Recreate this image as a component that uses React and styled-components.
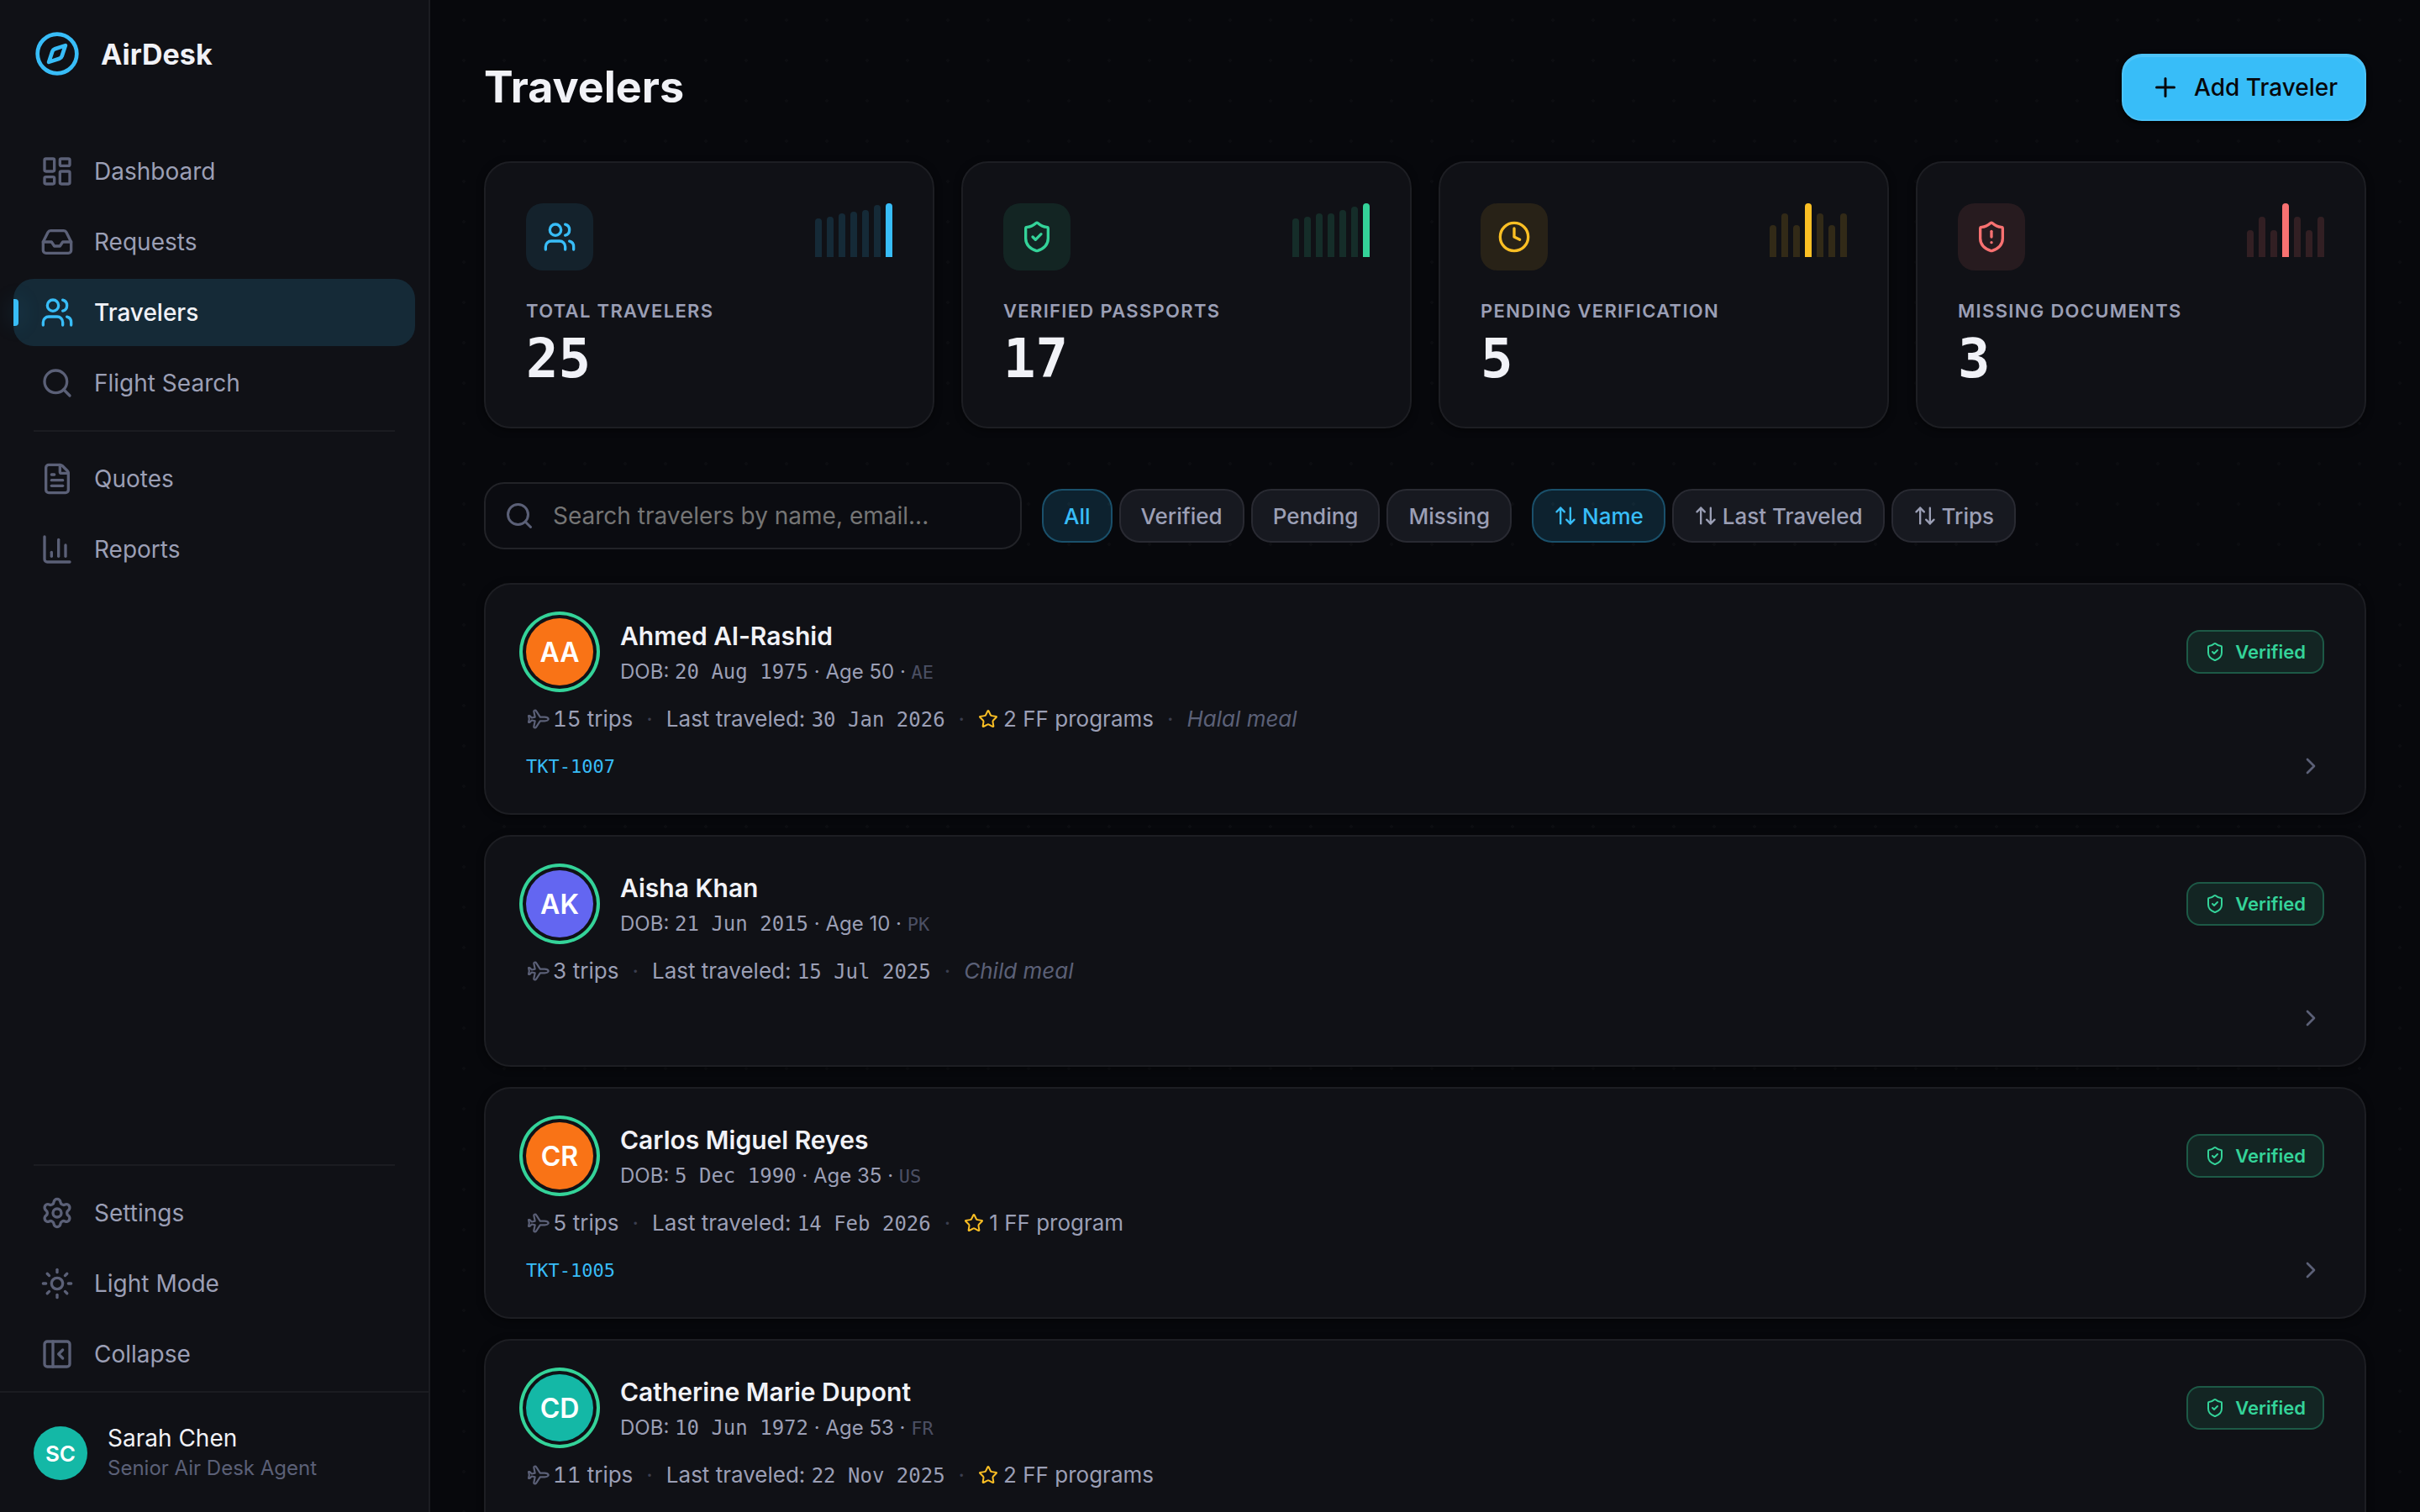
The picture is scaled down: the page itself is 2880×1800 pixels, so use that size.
import { useState } from "react";
import styled, { createGlobalStyle } from "styled-components";
import {
  ArrowUpDown,
  ChartColumn,
  ChevronRight,
  Clock,
  Compass,
  FileText,
  Inbox,
  LayoutDashboard,
  PanelLeftClose,
  Plane,
  Plus,
  Search,
  Settings,
  ShieldAlert,
  ShieldCheck,
  Star,
  Sun,
  Users,
} from "lucide-react";

const mainLinks = [
  { label: "Dashboard", icon: LayoutDashboard },
  { label: "Requests", icon: Inbox },
  { label: "Travelers", icon: Users },
  { label: "Flight Search", icon: Search },
];

const reportLinks = [
  { label: "Quotes", icon: FileText },
  { label: "Reports", icon: ChartColumn },
];

const stats = [
  {
    label: "Total Travelers",
    value: 25,
    icon: Users,
    color: "56, 189, 248",
    bars: [46, 48, 52, 54, 56, 62, 64],
    peak: 6,
  },
  {
    label: "Verified Passports",
    value: 17,
    icon: ShieldCheck,
    color: "52, 211, 153",
    bars: [46, 48, 52, 52, 56, 60, 64],
    peak: 6,
  },
  {
    label: "Pending Verification",
    value: 5,
    icon: Clock,
    color: "251, 191, 36",
    bars: [38, 52, 38, 64, 52, 38, 52],
    peak: 3,
  },
  {
    label: "Missing Documents",
    value: 3,
    icon: ShieldAlert,
    color: "248, 113, 113",
    bars: [32, 48, 32, 64, 48, 32, 48],
    peak: 3,
  },
];

const filters = ["All", "Verified", "Pending", "Missing"];
const sorts = ["Name", "Last Traveled", "Trips"];

const travelers = [
  {
    initials: "AA",
    name: "Ahmed Al-Rashid",
    dob: "20 Aug 1975",
    age: 50,
    country: "AE",
    trips: 15,
    last: "30 Jan 2026",
    programs: 2,
    meal: "Halal meal",
    ticket: "TKT-1007",
    color: "#f97316",
  },
  {
    initials: "AK",
    name: "Aisha Khan",
    dob: "21 Jun 2015",
    age: 10,
    country: "PK",
    trips: 3,
    last: "15 Jul 2025",
    programs: 0,
    meal: "Child meal",
    color: "#6366f1",
  },
  {
    initials: "CR",
    name: "Carlos Miguel Reyes",
    dob: "5 Dec 1990",
    age: 35,
    country: "US",
    trips: 5,
    last: "14 Feb 2026",
    programs: 1,
    ticket: "TKT-1005",
    color: "#f97316",
  },
  {
    initials: "CD",
    name: "Catherine Marie Dupont",
    dob: "10 Jun 1972",
    age: 53,
    country: "FR",
    trips: 11,
    last: "22 Nov 2025",
    programs: 2,
    color: "#14b8a6",
  },
];

function NavLink({ item, active }) {
  const Icon = item.icon;
  return (
    <NavItem href="#" $active={active} aria-current={active ? "page" : undefined}>
      <Icon size={40} strokeWidth={2} />
      {item.label}
    </NavItem>
  );
}

function StatCard({ stat }) {
  const Icon = stat.icon;
  return (
    <Stat>
      <StatTop>
        <StatIcon $color={stat.color}>
          <Icon size={40} strokeWidth={2} />
        </StatIcon>
        <Bars>
          {stat.bars.map((height, i) => (
            <Bar
              key={i}
              $color={stat.color}
              $peak={i === stat.peak}
              style={{ height }}
            />
          ))}
        </Bars>
      </StatTop>
      <StatLabel>{stat.label}</StatLabel>
      <StatValue>{stat.value}</StatValue>
    </Stat>
  );
}

function TravelerCard({ traveler }) {
  return (
    <Card>
      <CardTop>
        <Avatar $color={traveler.color}>{traveler.initials}</Avatar>
        <Identity>
          <Name>{traveler.name}</Name>
          <Birth>
            DOB: <Mono>{traveler.dob}</Mono> · Age {traveler.age} ·{" "}
            <Country>{traveler.country}</Country>
          </Birth>
        </Identity>
        <Badge>
          <ShieldCheck size={24} strokeWidth={2} />
          Verified
        </Badge>
      </CardTop>
      <Details>
        <Trips>
          <PlaneIcon size={26} strokeWidth={2} />
          {traveler.trips} trips
        </Trips>
        <Dot>·</Dot>
        <span>
          Last traveled: <Mono>{traveler.last}</Mono>
        </span>
        {traveler.programs > 0 && (
          <>
            <Dot>·</Dot>
            <Detail>
              <Star size={24} strokeWidth={2} color="#fbbf24" />
              {traveler.programs} FF program{traveler.programs > 1 ? "s" : ""}
            </Detail>
          </>
        )}
        {traveler.meal && (
          <>
            <Dot>·</Dot>
            <Meal>{traveler.meal}</Meal>
          </>
        )}
      </Details>
      <CardBottom>
        {traveler.ticket && <Ticket href="#">{traveler.ticket}</Ticket>}
        <OpenButton type="button" aria-label={`Open ${traveler.name}`}>
          <ChevronRight size={32} strokeWidth={2} />
        </OpenButton>
      </CardBottom>
    </Card>
  );
}

export default function App() {
  const [filter, setFilter] = useState("All");
  const [sort, setSort] = useState("Name");

  return (
    <Page>
      <GlobalStyle />
      <Sidebar>
        <Brand>
          <Compass size={56} strokeWidth={2} color="#38bdf8" />
          AirDesk
        </Brand>
        <Nav aria-label="Main">
          {mainLinks.map((item) => (
            <NavLink
              key={item.label}
              item={item}
              active={item.label === "Travelers"}
            />
          ))}
          <Divider />
          {reportLinks.map((item) => (
            <NavLink key={item.label} item={item} />
          ))}
        </Nav>
        <BottomNav>
          <Divider />
          <NavLink item={{ label: "Settings", icon: Settings }} />
          <NavItem as="button" type="button">
            <Sun size={40} strokeWidth={2} />
            Light Mode
          </NavItem>
          <NavItem as="button" type="button">
            <PanelLeftClose size={40} strokeWidth={2} />
            Collapse
          </NavItem>
        </BottomNav>
        <Profile>
          <ProfilePic>SC</ProfilePic>
          <div>
            <ProfileName>Sarah Chen</ProfileName>
            <ProfileRole>Senior Air Desk Agent</ProfileRole>
          </div>
        </Profile>
      </Sidebar>
      <Main>
        <Header>
          <h1>Travelers</h1>
          <AddButton type="button">
            <Plus size={36} strokeWidth={2} />
            Add Traveler
          </AddButton>
        </Header>
        <Stats>
          {stats.map((stat) => (
            <StatCard key={stat.label} stat={stat} />
          ))}
        </Stats>
        <Toolbar>
          <SearchBox>
            <Search size={36} strokeWidth={2} />
            <input
              type="text"
              aria-label="Search travelers"
              placeholder="Search travelers by name, email..."
            />
          </SearchBox>
          <Pills>
            {filters.map((label) => (
              <Pill
                key={label}
                type="button"
                $active={filter === label}
                onClick={() => setFilter(label)}
              >
                {label}
              </Pill>
            ))}
          </Pills>
          <Pills>
            {sorts.map((label) => (
              <Pill
                key={label}
                type="button"
                $active={sort === label}
                onClick={() => setSort(label)}
              >
                <ArrowUpDown size={28} strokeWidth={2} />
                {label}
              </Pill>
            ))}
          </Pills>
        </Toolbar>
        <List>
          {travelers.map((traveler) => (
            <TravelerCard key={traveler.name} traveler={traveler} />
          ))}
        </List>
      </Main>
    </Page>
  );
}

const GlobalStyle = createGlobalStyle`
  * {
    box-sizing: border-box;
  }
  body {
    margin: 0;
    background: #07080c;
    color: #f1f2f7;
    font-family: Inter, "Liberation Sans", sans-serif;
    -webkit-font-smoothing: antialiased;
  }
  button,
  input {
    font-family: inherit;
  }
  h1,
  h2,
  p,
  ul {
    margin: 0;
    padding: 0;
  }
  svg {
    flex-shrink: 0;
  }
`;

const Page = styled.div`
  display: flex;
  height: 100vh;
  background-color: #07080c;
  background-image: radial-gradient(
    circle,
    rgba(255, 255, 255, 0.02) 2px,
    transparent 2px
  );
  background-size: 48px 48px;
`;

const Sidebar = styled.aside`
  width: 512px;
  flex-shrink: 0;
  display: flex;
  flex-direction: column;
  background: #101116;
  border-right: 2px solid #1b1c21;
`;

const Brand = styled.div`
  display: flex;
  align-items: center;
  gap: 24px;
  height: 128px;
  padding: 0 40px;
  margin-bottom: 36px;
  font-size: 34px;
  font-weight: 700;
`;

const Nav = styled.nav`
  display: flex;
  flex-direction: column;
  gap: 4px;
  padding: 0 16px;
`;

const BottomNav = styled(Nav)`
  margin-top: auto;
  padding-bottom: 4px;
`;

const NavItem = styled.a`
  position: relative;
  display: flex;
  align-items: center;
  gap: 24px;
  height: 80px;
  padding: 0 32px;
  border: none;
  border-radius: 24px;
  background: ${(p) => (p.$active ? "rgba(56, 189, 248, 0.15)" : "transparent")};
  color: ${(p) => (p.$active ? "#f1f2f7" : "#9b9fb5")};
  font-size: 28px;
  font-weight: ${(p) => (p.$active ? 500 : 400)};
  text-decoration: none;
  cursor: pointer;
  svg {
    color: ${(p) => (p.$active ? "#38bdf8" : "#5b6077")};
  }
  &::before {
    content: "";
    display: ${(p) => (p.$active ? "block" : "none")};
    position: absolute;
    left: 0;
    top: 24px;
    width: 6px;
    height: 32px;
    border-radius: 0 4px 4px 0;
    background: #38bdf8;
    box-shadow: 0 0 24px rgba(56, 189, 248, 0.25);
  }
`;

const Divider = styled.hr`
  height: 2px;
  margin: 12px 24px;
  border: none;
  background: #1b1c21;
`;

const Profile = styled.div`
  display: flex;
  align-items: center;
  gap: 24px;
  padding: 36px 40px 34px;
  border-top: 2px solid #1b1c21;
`;

const ProfilePic = styled.div`
  display: flex;
  align-items: center;
  justify-content: center;
  width: 64px;
  height: 64px;
  border-radius: 50%;
  background: #14b8a6;
  color: #ffffff;
  font-size: 26px;
  font-weight: 600;
`;

const ProfileName = styled.p`
  font-size: 28px;
  line-height: 36px;
`;

const ProfileRole = styled.p`
  color: #5b6077;
  font-size: 24px;
  line-height: 36px;
`;

const Main = styled.main`
  flex: 1;
  min-width: 0;
  padding: 64px;
  overflow-y: auto;
  scrollbar-width: none;
`;

const Header = styled.header`
  display: flex;
  align-items: center;
  justify-content: space-between;
  margin-bottom: 48px;
  h1 {
    font-size: 52px;
    font-weight: 700;
    line-height: 80px;
  }
`;

const AddButton = styled.button`
  display: flex;
  align-items: center;
  gap: 16px;
  height: 80px;
  padding: 0 32px;
  border: 2px solid #4bc3f9;
  border-radius: 24px;
  background: #38bdf8;
  box-shadow: inset 0 2px 0 rgba(255, 255, 255, 0.12), 0 2px 6px #000000;
  color: #07080c;
  font-size: 28px;
  font-weight: 500;
  cursor: pointer;
`;

const Stats = styled.section`
  display: grid;
  grid-template-columns: repeat(4, 1fr);
  gap: 32px;
  margin-bottom: 64px;
`;

const Stat = styled.div`
  padding: 48px;
  border: 2px solid #1d1e23;
  border-radius: 32px;
  background: #101116;
  box-shadow: 0 2px 8px rgba(0, 0, 0, 0.5);
`;

const StatTop = styled.div`
  display: flex;
  align-items: flex-start;
  justify-content: space-between;
  margin-bottom: 32px;
`;

const StatIcon = styled.div`
  display: flex;
  align-items: center;
  justify-content: center;
  width: 80px;
  height: 80px;
  border-radius: 20px;
  background: rgba(${(p) => p.$color}, 0.1);
  color: rgb(${(p) => p.$color});
`;

const Bars = styled.div`
  display: flex;
  align-items: flex-end;
  gap: 6px;
  height: 64px;
`;

const Bar = styled.div`
  width: 8px;
  border-radius: 4px 4px 0 0;
  background: rgba(${(p) => p.$color}, ${(p) => (p.$peak ? 1 : 0.15)});
`;

const StatLabel = styled.p`
  margin-bottom: 8px;
  color: #9b9fb5;
  font-size: 22px;
  font-weight: 600;
  line-height: 32px;
  letter-spacing: 0.06em;
  text-transform: uppercase;
`;

const StatValue = styled.p`
  font-family: "DejaVu Sans Mono", monospace;
  font-size: 64px;
  font-weight: 700;
  line-height: 66px;
`;

const Toolbar = styled.div`
  display: flex;
  align-items: center;
  gap: 24px;
  margin-bottom: 40px;
`;

const SearchBox = styled.label`
  display: flex;
  align-items: center;
  gap: 22px;
  width: 640px;
  height: 80px;
  padding: 0 22px;
  border: 2px solid #222328;
  border-radius: 24px;
  background: #0b0c11;
  color: #5b6077;
  input {
    flex: 1;
    min-width: 0;
    padding: 0;
    border: none;
    outline: none;
    background: transparent;
    color: #f1f2f7;
    font-size: 28px;
  }
  input::placeholder {
    color: #757575;
  }
`;

const Pills = styled.div`
  display: flex;
  gap: 8px;
`;

const Pill = styled.button`
  display: flex;
  align-items: center;
  gap: 6px;
  height: 64px;
  padding: 0 24px;
  border: 2px solid
    ${(p) => (p.$active ? "rgba(56, 189, 248, 0.3)" : "#292a32")};
  border-radius: 24px;
  background: ${(p) => (p.$active ? "rgba(56, 189, 248, 0.15)" : "#171920")};
  color: ${(p) => (p.$active ? "#38bdf8" : "#9b9fb5")};
  font-size: 26px;
  font-weight: 500;
  cursor: pointer;
`;

const List = styled.ul`
  display: flex;
  flex-direction: column;
  gap: 24px;
  list-style: none;
`;

const Card = styled.li`
  padding: 40px 48px;
  border: 2px solid #1d1e23;
  border-radius: 32px;
  background: #101116;
  box-shadow: 0 2px 8px rgba(0, 0, 0, 0.5);
`;

const CardTop = styled.div`
  display: flex;
  align-items: flex-start;
  gap: 32px;
  margin-bottom: 14px;
`;

const Avatar = styled.div`
  display: flex;
  align-items: center;
  justify-content: center;
  width: 80px;
  height: 80px;
  border-radius: 50%;
  background: ${(p) => p.$color};
  box-shadow: 0 0 0 4px #101116, 0 0 0 8px #34d399;
  color: #ffffff;
  font-size: 32px;
  font-weight: 600;
`;

const Identity = styled.div`
  flex: 1;
`;

const Name = styled.h2`
  font-size: 30px;
  font-weight: 600;
  line-height: 42px;
`;

const Birth = styled.p`
  color: #9b9fb5;
  font-size: 24px;
  line-height: 44px;
`;

const Mono = styled.span`
  font-family: "DejaVu Sans Mono", monospace;
  font-size: 24px;
  line-height: 1;
`;

const Country = styled(Mono)`
  color: #4b4f63;
  font-size: 22px;
`;

const Badge = styled.span`
  display: flex;
  align-items: center;
  gap: 12px;
  height: 52px;
  margin-top: 14px;
  padding: 0 20px;
  border: 2px solid rgba(52, 211, 153, 0.3);
  border-radius: 16px;
  background: rgba(52, 211, 153, 0.1);
  color: #34d399;
  font-size: 22px;
  font-weight: 600;
`;

const Details = styled.div`
  display: flex;
  align-items: center;
  gap: 16px;
  margin-bottom: 20px;
  color: #9b9fb5;
  font-size: 26px;
  line-height: 40px;
`;

const Detail = styled.span`
  display: flex;
  align-items: center;
  gap: 6px;
`;

const Trips = styled(Detail)`
  font-variant-numeric: tabular-nums;
`;

const PlaneIcon = styled(Plane)`
  transform: rotate(45deg);
  color: #5b6077;
`;

const Dot = styled.span`
  color: #3b3e4f;
`;

const Meal = styled.span`
  color: #5b6077;
  font-style: italic;
`;

const CardBottom = styled.div`
  display: flex;
  align-items: center;
  justify-content: space-between;
  height: 32px;
`;

const Ticket = styled.a`
  color: #38bdf8;
  font-family: "DejaVu Sans Mono", monospace;
  font-size: 22px;
  text-decoration: none;
`;

const OpenButton = styled.button`
  display: flex;
  margin-left: auto;
  padding: 0;
  border: none;
  background: transparent;
  color: #5b6077;
  cursor: pointer;
`;
